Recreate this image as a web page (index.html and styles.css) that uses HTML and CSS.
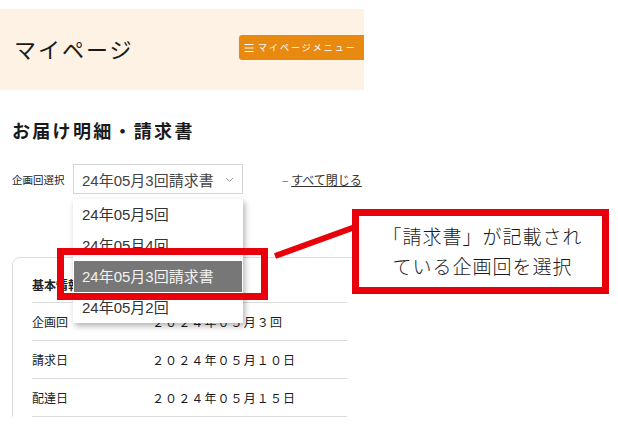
FILE: index.html
```html
<!DOCTYPE html>
<html lang="ja">
<head>
<meta charset="utf-8">
<title>お届け明細・請求書</title>
<link rel="stylesheet" href="styles.css">
</head>
<body>
<div class="stage">
  <div class="page">
    <header class="site-header">
      <div class="site-title">マイページ</div>
      <div class="menu-btn">
        <svg class="menu-icon" width="10" height="10" viewBox="0 0 10 10"><path d="M0.5 1.5h9M0.5 5h9M0.5 8.5h9" stroke="#fff" stroke-width="1" fill="none"/></svg>
        <span>マイページメニュー</span>
      </div>
    </header>

    <h1 class="page-title">お届け明細・請求書</h1>

    <div class="select-row">
      <span class="select-label">企画回選択</span>
      <div class="select-wrap">
        <div class="select-box">
          <span>24年05月3回請求書</span>
          <svg class="chevron" width="9" height="6" viewBox="0 0 9 6"><path d="M1 1l3.5 3.5L8 1" fill="none" stroke="#9a9a9a" stroke-width="1"/></svg>
        </div>
        <ul class="dropdown">
          <li>24年05月5回</li>
          <li>24年05月4回</li>
          <li class="selected">24年05月3回請求書</li>
          <li>24年05月2回</li>
        </ul>
      </div>
      <a class="close-all"><span class="dash">–</span> <span class="ul">すべて閉じる</span></a>
    </div>

    <section class="card">
      <div class="card-head">基本情報</div>
      <div class="row"><span class="row-label">企画回</span><span class="row-value">２０２４年０５月３回</span></div>
      <div class="row"><span class="row-label">請求日</span><span class="row-value">２０２４年０５月１０日</span></div>
      <div class="row"><span class="row-label">配達日</span><span class="row-value">２０２４年０５月１５日</span></div>
    </section>
  </div>

  <div class="mark-rect"></div>
  <svg class="mark-line" width="618" height="427" viewBox="0 0 618 427"><line x1="275" y1="256" x2="355" y2="227" stroke="#e8000b" stroke-width="6"/></svg>
  <div class="callout">「請求書」が記載され<br>ている企画回を選択</div>
</div>
</body>
</html>
```

FILE: styles.css
```css
* { box-sizing: border-box; }
html, body { margin: 0; padding: 0; background: #fff; }
body {
  font-family: "Noto Sans CJK JP", "Noto Sans", sans-serif;
  color: #222;
}
.stage {
  position: relative;
  width: 618px;
  height: 427px;
  overflow: hidden;
}
.page {
  width: 364px;
  height: 417px;
  overflow: hidden;
  padding-top: 9px;
}
.site-header {
  height: 81px;
  background: #fdf2e4;
  display: flex;
  justify-content: space-between;
  align-items: flex-start;
  padding-left: 14px;
}
.site-title {
  font-size: 22px;
  letter-spacing: 2px;
  line-height: 30px;
  margin-top: 24px;
  color: #1a1a1a;
}
.menu-btn {
  margin-top: 26px;
  width: 125px;
  height: 25px;
  background: #e98a10;
  border-radius: 3px 0 0 3px;
  color: #fff;
  font-size: 9px;
  letter-spacing: 2px;
  line-height: 25px;
  padding-left: 5px;
  white-space: nowrap;
  overflow: hidden;
  display: flex;
  align-items: center;
  gap: 4px;
}
.menu-icon { flex: none; }
.page-title {
  margin: 27px 0 0 12px;
  font-size: 18px;
  line-height: 26px;
  letter-spacing: 2.3px;
  font-weight: 700;
  color: #1a1a1a;
}
.select-row {
  margin-top: 21px;
  padding-left: 12px;
  display: flex;
  align-items: center;
  height: 30px;
}
.select-label {
  font-size: 10.5px;
  color: #222;
  width: 61px;
}
.select-wrap {
  position: relative;
  width: 170px;
  height: 30px;
}
.select-box {
  height: 30px;
  border: 1px solid #d4d4d4;
  display: flex;
  align-items: center;
  justify-content: space-between;
  padding: 0 8px 0 8px;
  font-family: "Liberation Sans", "Noto Sans CJK JP", sans-serif;
  font-size: 15px;
  color: #444;
}
.chevron { margin-top: 1px; }
.dropdown {
  position: absolute;
  top: 35px;
  left: 0;
  width: 170px;
  margin: 0;
  padding: 0;
  list-style: none;
  background: #fff;
  box-shadow: 2px 3px 6px rgba(0,0,0,0.3);
  z-index: 2;
  font-family: "Liberation Sans", "Noto Sans CJK JP", sans-serif;
  font-size: 15px;
  color: #333;
}
.dropdown li {
  height: 31px;
  line-height: 31px;
  padding-left: 9px;
}
.dropdown li.selected {
  background: #777;
  color: #f2f2f2;
  margin-left: 1px;
  margin-right: 1px;
  padding-left: 8px;
}
.close-all {
  margin-left: 39px;
  font-size: 12px;
  color: #333;
  white-space: nowrap;
}
.close-all .dash { color: #666; }
.close-all .ul { text-decoration: underline; }
.card {
  margin: 63px 0 0 12px;
  width: 380px;
  border: 1px solid #dcdcdc;
  border-radius: 8px 8px 0 0;
  padding-left: 19px;
  background: #fff;
}
.card-head, .row {
  width: 315px;
  border-bottom: 1px solid #dcdcdc;
}
.card-head {
  font-size: 12px;
  font-weight: 700;
  line-height: 18px;
  padding: 18px 0 8px;
}
.row {
  height: 38px;
  display: flex;
  align-items: center;
  font-size: 12px;
}
.row-label { width: 120px; }
.row-value { letter-spacing: 1.1px; color: #1a1a1a; }
.mark-rect {
  position: absolute;
  left: 57px;
  top: 248px;
  width: 211px;
  height: 52px;
  border: 7px solid #e8000b;
  z-index: 3;
}
.mark-line {
  position: absolute;
  left: 0;
  top: 0;
  z-index: 3;
}
.callout {
  position: absolute;
  left: 352px;
  top: 209px;
  width: 257px;
  height: 85px;
  border: 7px solid #e8000b;
  background: #fff;
  z-index: 4;
  text-align: center;
  font-size: 19px;
  font-weight: 300;
  line-height: 30px;
  letter-spacing: 1px;
  padding-top: 5px;
  padding-left: 4px;
  color: #1a1a1a;
}
```
